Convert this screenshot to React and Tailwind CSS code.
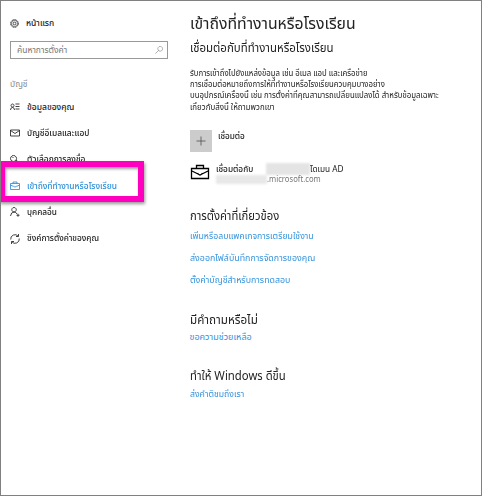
import { useLayoutEffect, useRef, useState } from "react";

// Single line of text, scaled horizontally to a given width.
function Line({ width, className = "", children }) {
  const ref = useRef(null);
  const [scale, setScale] = useState(1);
  useLayoutEffect(() => {
    if (ref.current.offsetWidth) setScale(width / ref.current.offsetWidth);
  }, [width]);
  return (
    <span className={`flex items-center whitespace-nowrap ${className}`} style={{ width }}>
      <span ref={ref} className="inline-block shrink-0 origin-left" style={{ transform: `scaleX(${scale})` }}>
        {children}
      </span>
    </span>
  );
}

function Icon({ children, className = "size-[10px]", box = "0 0 20 20", stroke = 1.7 }) {
  return (
    <svg viewBox={box} className={`shrink-0 ${className}`} fill="none" stroke="currentColor" strokeWidth={stroke}>
      {children}
    </svg>
  );
}

const gear = (
  <>
    <circle cx="10" cy="10" r="8.5" strokeWidth="2" strokeDasharray="3.3 1.2" />
    <circle cx="10" cy="10" r="6.8" strokeWidth="1.3" />
    <circle cx="10" cy="10" r="3" />
  </>
);

const items = [
  {
    text: "ข้อมูลของคุณ",
    width: 47,
    icon: <path d="M1 16q0-5 4-5t4 5M11 4h8M11 9h8M11 14h8M5 4a3 3 0 1 0 .1 0z" />,
  },
  { text: "บัญชีอีเมลและแอป", width: 62, icon: <path d="M1 4h18v12H1zM1 5l9 6 9-6" /> },
  {
    text: "ตัวเลือกการลงชื่อ",
    width: 58,
    icon: <path d="M7 1a6 6 0 1 0 .1 0zM10 12l7 7h2v-3l-7-6M5 5h2" />,
  },
  {
    text: "เข้าถึงที่ทำงานหรือโรงเรียน",
    width: 90,
    icon: <path d="M1 5h18v12H1zM6 5V2h8v3M1 8l6 3M19 8l-6 3M7 10q3 5 6 0" />,
    active: true,
  },
  {
    text: "บุคคลอื่น",
    width: 30,
    icon: <path d="M8 1a4.500 4.500 0 1 0 .1 0zM1 18q1-8 7-8 4 0 6 4M13 16.500h6M16 13.500v6" />,
  },
  {
    text: "ซิงค์การตั้งค่าของคุณ",
    width: 72,
    icon: <path d="M1.500 11a8.500 8.500 0 0 1 15-6.500M18.500 9a8.500 8.500 0 0 1-15 6.500M17 0v5h-5M3 20v-5h5" />,
  },
];

export default function App() {
  return (
    <div className="relative flex h-[496px] w-[482px] overflow-hidden border border-[#808080] bg-white font-['Noto_Sans','Noto_Sans_Thai',sans-serif] text-[#222]">
      <aside className="flex w-[188px] flex-col pl-[9px] pt-[14px]">
        <div className="flex h-4 items-center gap-[7px]">
          <Icon className="size-[9px]">{gear}</Icon>
          <Line width={28} className="text-[8.5px] font-medium">หน้าแรก</Line>
        </div>
        <div className="mt-[10px] flex h-[18px] w-[158px] items-center justify-between border border-[#999] pl-[6px] pr-1 text-[#777]">
          <Line width={50} className="text-[8.5px]">ค้นหาการตั้งค่า</Line>
          <Icon className="size-[8px]" stroke={1.4}><path d="M13 1a6 6 0 1 0 .1 0zM9 11l-8 8" /></Icon>
        </div>
        <div className="mt-[17px] flex h-4 items-center text-[#888]">
          <Line width={18} className="text-[8.5px]">บัญชี</Line>
        </div>
        <nav className="mt-[2px] flex flex-col">
          {items.map((it) => (
            <div key={it.text} className={`flex h-[26.3px] items-center gap-[7px] ${it.active ? "text-[#2b8ed8]" : ""}`}>
              <Icon>{it.icon}</Icon>
              <Line width={it.width} className="text-[8.5px] font-medium">{it.text}</Line>
            </div>
          ))}
        </nav>
      </aside>

      <main className="flex flex-col pl-[0.5px] pt-[10px]">
        <h1 className="flex h-6 items-center"><Line width={165.5} className="text-[16px]">เข้าถึงที่ทำงานหรือโรงเรียน</Line></h1>
        <h2 className="mt-[3px] flex h-5 items-center"><Line width={143.5} className="text-[12.5px]">เชื่อมต่อกับที่ทำงานหรือโรงเรียน</Line></h2>
        <div className="mt-[9px] flex flex-col text-[8px] leading-[11.2px]">
          <Line width={178}>รับการเข้าถึงไปยังแหล่งข้อมูล เช่น อีเมล แอป และเครือข่าย</Line>
          <Line width={194.5}>การเชื่อมต่อหมายถึงการให้ที่ทำงานหรือโรงเรียนควบคุมบางอย่าง</Line>
          <Line width={248.5}>บนอุปกรณ์เครื่องนี้ เช่น การตั้งค่าที่คุณสามารถเปลี่ยนแปลงได้ สำหรับข้อมูลเฉพาะ</Line>
          <Line width={85}>เกี่ยวกับสิ่งนี้ ให้ถามพวกเขา</Line>
        </div>
        <div className="mt-[18.2px] flex h-[22px] items-start gap-[6px]">
          <div className="flex size-[22px] items-center justify-center bg-[#ccc] text-[#555]">
            <Icon className="size-[10px]"><path d="M10 1v18M1 10h18" /></Icon>
          </div>
          <Line width={27} className="h-3 text-[8.5px] font-medium">เชื่อมต่อ</Line>
        </div>
        <div className="mt-[11px] flex h-[24px] items-start gap-[6px]">
          <Icon className="mt-px h-[18px] w-5 text-black" box="0 0 20 18" stroke={1.3}>
            <path d="M1.500 4.500h17v10h-17zM6.500 4.500V1.500h7v3M2 7l6 3M18 7l-6 3M7.500 9q2.500 4 5 0" />
          </Icon>
          <div className="flex flex-col">
            <div className="flex h-3 items-center">
              <Line width={37} className="text-[8.5px] font-medium">เชื่อมต่อกับ</Line>
              <span className="ml-[13px] h-3 w-[44px] bg-[#e4e4e4] blur-[1px]" />
              <Line width={34} className="text-[8.5px]">โดเมน AD</Line>
            </div>
            <div className="-mt-px flex h-[11px] items-center text-[#777]">
              <span className="h-[9px] w-[51px] bg-[#e8e8e8] blur-[1px]" />
              <Line width={54} className="text-[8.5px]">.microsoft.com</Line>
            </div>
          </div>
        </div>

        <h2 className="mt-[19px] flex h-5 items-center"><Line width={89} className="text-[12.5px]">การตั้งค่าที่เกี่ยวข้อง</Line></h2>
        <div className="-mt-px flex flex-col text-[9px] text-[#3493dd]">
          <Line width={124} className="h-[22px]">เพิ่มหรือลบแพคเกจการเตรียมใช้งาน</Line>
          <Line width={125} className="h-[22px]">ส่งออกไฟล์บันทึกการจัดการของคุณ</Line>
          <Line width={100} className="h-[22px]">ตั้งค่าบัญชีสำหรับการทดสอบ</Line>
        </div>
        <h2 className="mt-[19px] flex h-5 items-center"><Line width={68} className="text-[12.5px]">มีคำถามหรือไม่</Line></h2>
        <Line width={62} className="-mt-px h-4 text-[9px] text-[#3493dd]">ขอความช่วยเหลือ</Line>
        <h2 className="mt-[21px] flex h-5 items-center"><Line width={96} className="text-[12.5px]">ทำให้ Windows ดีขึ้น</Line></h2>
        <Line width={54} className="h-4 text-[9px] text-[#3493dd]">ส่งคำติชมถึงเรา</Line>
      </main>

      <div className="absolute -left-[2px] top-[160px] h-[41px] w-[145px] border-[6px] border-[#ff00be] shadow-[1px_2px_3px_rgba(0,0,0,0.4),inset_1px_2px_3px_rgba(0,0,0,0.4)]" />
    </div>
  );
}
